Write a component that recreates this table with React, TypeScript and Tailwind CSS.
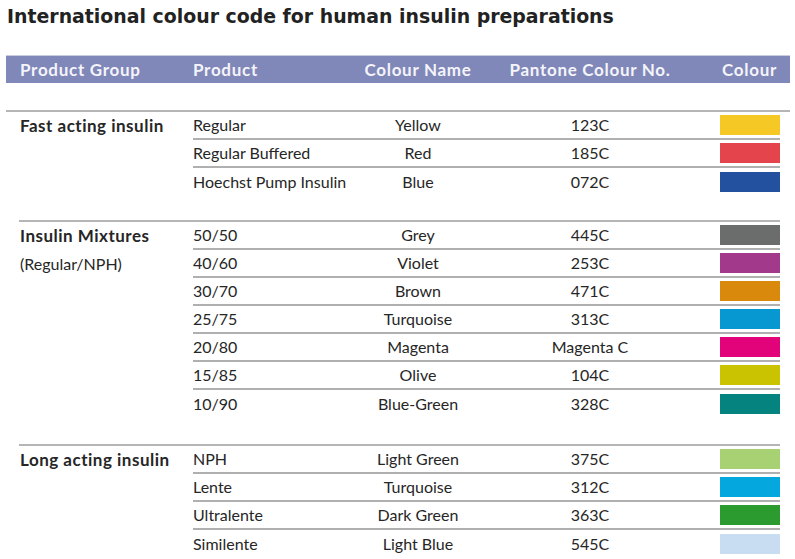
import React from "react";

type Row = { product: string; name: string; pantone: string; color: string };
type Section = { group: string[]; rows: Row[]; topFull?: boolean; spacer: number };

const sections: Section[] = [
  {
    group: ["Fast acting insulin"],
    topFull: true,
    spacer: 24,
    rows: [
      { product: "Regular", name: "Yellow", pantone: "123C", color: "#f5c826" },
      { product: "Regular Buffered", name: "Red", pantone: "185C", color: "#e4444b" },
      { product: "Hoechst Pump Insulin", name: "Blue", pantone: "072C", color: "#24519f" },
    ],
  },
  {
    group: ["Insulin Mixtures", "(Regular/NPH)"],
    spacer: 26,
    rows: [
      { product: "50/50", name: "Grey", pantone: "445C", color: "#6b6d6d" },
      { product: "40/60", name: "Violet", pantone: "253C", color: "#a3398b" },
      { product: "30/70", name: "Brown", pantone: "471C", color: "#d98a0c" },
      { product: "25/75", name: "Turquoise", pantone: "313C", color: "#0798d2" },
      { product: "20/80", name: "Magenta", pantone: "Magenta C", color: "#e2037b" },
      { product: "15/85", name: "Olive", pantone: "104C", color: "#c9c301" },
      { product: "10/90", name: "Blue-Green", pantone: "328C", color: "#05837f" },
    ],
  },
  {
    group: ["Long acting insulin"],
    spacer: 0,
    rows: [
      { product: "NPH", name: "Light Green", pantone: "375C", color: "#a7d172" },
      { product: "Lente", name: "Turquoise", pantone: "312C", color: "#05a8de" },
      { product: "Ultralente", name: "Dark Green", pantone: "363C", color: "#2b9b2f" },
      { product: "Similente", name: "Light Blue", pantone: "545C", color: "#c9ddf2" },
    ],
  },
];

export default function App() {
  return (
    <div className="w-[795px] h-[559px] overflow-hidden bg-white text-[#262626]">
      <div className="h-[55px] pl-[7px] pt-[5px]">
        <h1
          className="text-[18.9px] font-bold text-[#222] leading-[23px] whitespace-nowrap"
          style={{ fontFamily: "'DejaVu Sans', Verdana, sans-serif" }}
        >
          International colour code for human insulin preparations
        </h1>
      </div>
      <div className="ml-[6px] w-[784px]" style={{ fontFamily: "Lato, 'Open Sans', sans-serif" }}>
        <div className="h-[28px] bg-[#8087b9] border-t border-[#c9cbe0] flex items-center text-[#f4f4fa] font-bold text-[17px] tracking-[0.7px] whitespace-nowrap">
          <div className="w-[187px] pl-[14px]">Product Group</div>
          <div className="w-[150px]">Product</div>
          <div className="w-[150px] text-center">Colour Name</div>
          <div className="w-[194px] text-center">Pantone Colour No.</div>
          <div className="flex-1 flex justify-end pr-[13px]">Colour</div>
        </div>
        <div className="h-[27px]" />
        {sections.map((s, si) => (
          <div key={si}>
            <div
              className={
                s.topFull
                  ? "h-[2px] bg-[#b5b5b5] w-[784px]"
                  : "h-[2px] bg-[#b5b5b5] ml-[13px] w-[761px]"
              }
            />
            <div className="flex">
              <div className="w-[187px] pl-[14px] text-[16px] whitespace-nowrap">
                {s.group.map((g, gi) => (
                  <div
                    key={gi}
                    className={
                      gi === 0
                        ? "h-[28px] flex items-center font-bold text-[17px] tracking-[0.5px]"
                        : "h-[28px] flex items-center"
                    }
                  >
                    {g}
                  </div>
                ))}
              </div>
              <div className="w-[587px]">
                {s.rows.map((r, ri) => (
                  <div
                    key={ri}
                    className={
                      ri < s.rows.length - 1
                        ? "h-[28px] flex items-center border-b-2 border-[#b0b0b0] text-[16px] whitespace-nowrap"
                        : "h-[28px] flex items-center text-[16px] whitespace-nowrap"
                    }
                  >
                    <div className="w-[150px]">{r.product}</div>
                    <div className="w-[150px] text-center">{r.name}</div>
                    <div className="w-[194px] text-center">{r.pantone}</div>
                    <div className="flex-1 flex justify-end">
                      <div className="w-[60px] h-[20px]" style={{ backgroundColor: r.color }} />
                    </div>
                  </div>
                ))}
              </div>
            </div>
            {s.spacer > 0 && <div style={{ height: s.spacer }} />}
          </div>
        ))}
      </div>
    </div>
  );
}
